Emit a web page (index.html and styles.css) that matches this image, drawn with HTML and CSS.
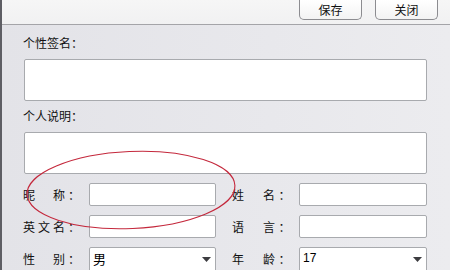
FILE: index.html
```html
<!DOCTYPE html>
<html lang="zh-CN">
<head>
<meta charset="utf-8">
<title>个人资料</title>
<link rel="stylesheet" href="styles.css">
</head>
<body>
<div class="page">
  <div class="toolbar">
    <button class="btn">保存</button>
    <button class="btn">关闭</button>
  </div>
  <div class="main">
    <div class="label">个性签名：</div>
    <div class="area"></div>
    <div class="label label2">个人说明：</div>
    <div class="area"></div>
    <div class="grid">
      <div class="flabel">昵　称：</div>
      <div class="field"></div>
      <div class="flabel right">姓　名：</div>
      <div class="field"></div>

      <div class="flabel">英文名：</div>
      <div class="field"></div>
      <div class="flabel right">语　言：</div>
      <div class="field"></div>

      <div class="flabel">性　别：</div>
      <div class="field select"><span>男</span><svg class="arrow" width="9" height="5" viewBox="0 0 9 5"><path d="M0 0H9L4.5 5Z" fill="#3c3c40"/></svg></div>
      <div class="flabel right">年　龄：</div>
      <div class="field select"><span class="num">17</span><svg class="arrow" width="9" height="5" viewBox="0 0 9 5"><path d="M0 0H9L4.5 5Z" fill="#3c3c40"/></svg></div>
    </div>
  </div>
  <svg class="mark" width="450" height="270" viewBox="0 0 450 270">
    <ellipse cx="131" cy="190" rx="104" ry="38.5" transform="rotate(-2.5 131 190)" fill="none" stroke="#c4283c" stroke-width="1.1"/>
  </svg>
</div>
</body>
</html>
```

FILE: styles.css
```css
html, body {
  margin: 0;
  padding: 0;
}
body {
  width: 450px;
  height: 270px;
  overflow: hidden;
  font-family: "Noto Sans CJK SC", "Liberation Sans", sans-serif;
  font-size: 12px;
  color: #111;
  background: #e6e6ea;
}
.page {
  position: relative;
  height: 270px;
  border-left: 2px solid #5e5e64;
  box-sizing: border-box;
}
.toolbar {
  height: 24px;
  background: linear-gradient(#f6f6f6, #f1f1f2);
  border-bottom: 1px solid #a4a4a8;
  display: flex;
  justify-content: flex-end;
  gap: 13px;
  padding-right: 12px;
}
.btn {
  width: 63px;
  height: 20px;
  margin: 0;
  padding: 0;
  border: 1px solid #8c8c90;
  border-top: none;
  border-radius: 0 0 5px 5px;
  background: linear-gradient(#ffffff, #f3f3f3);
  font-family: inherit;
  font-size: 12px;
  line-height: 18px;
  color: #111;
}
.main {
  background: linear-gradient(90deg, #e3e3e8, #e8e8ec 60%, #ececef);
  padding: 8px 0 0 22px;
  height: 245px;
  box-sizing: border-box;
}
.label {
  height: 20px;
  line-height: 20px;
  margin-left: -1px;
}
.label2 {
  margin-top: 5px;
}
.area {
  width: 403px;
  height: 42px;
  margin-top: 6px;
  background: #fff;
  border: 1px solid #a8aaae;
  border-radius: 2px;
  box-sizing: border-box;
}
.grid {
  margin-top: 9px;
  margin-left: -1px;
  display: grid;
  grid-template-columns: 66px 127px 83px 128px;
  grid-auto-rows: 23px;
  row-gap: 9px;
}
.flabel {
  line-height: 23px;
  letter-spacing: 3px;
  white-space: nowrap;
}
.right {
  padding-left: 16px;
  letter-spacing: 3.5px;
}
.field {
  background: #fff;
  border: 1px solid #a8aaae;
  border-radius: 2px;
  box-sizing: border-box;
}
.select {
  height: 30px;
  display: flex;
  align-items: flex-start;
  justify-content: space-between;
  padding: 0 4px 0 3px;
  line-height: 21px;
  color: #000;
  font-size: 13px;
}
.num {
  font-family: "Liberation Sans", sans-serif;
  font-size: 12px;
}
.arrow {
  margin-top: 9px;
}
.mark {
  position: absolute;
  left: -2px;
  top: 0;
  pointer-events: none;
}
```
